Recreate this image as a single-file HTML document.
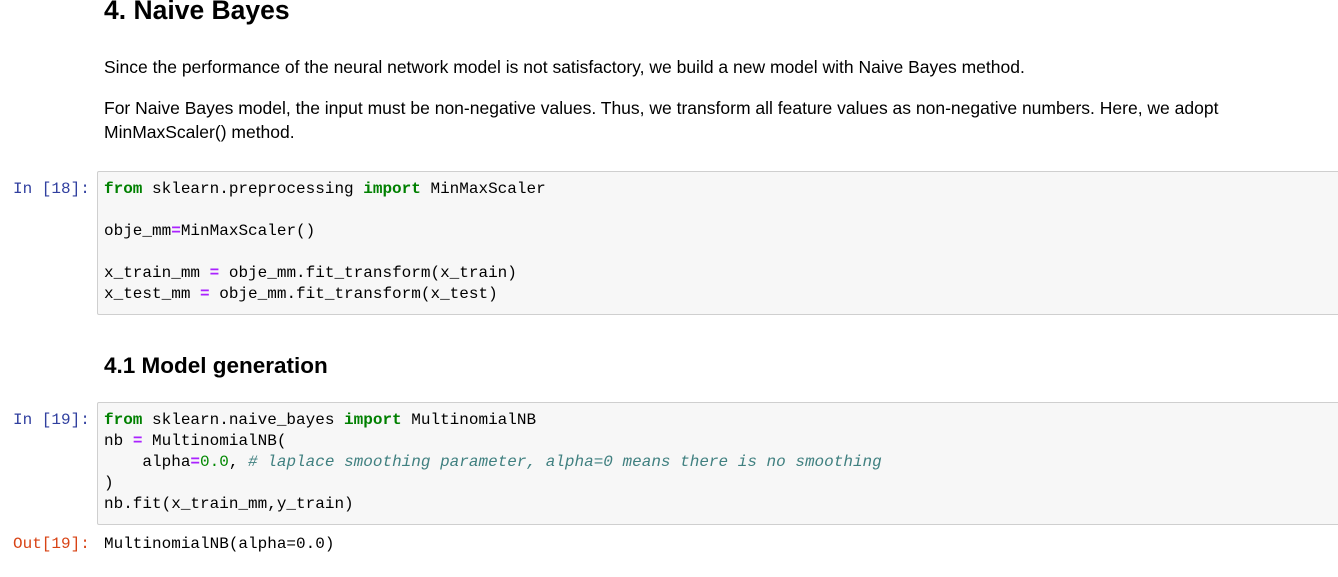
<!DOCTYPE html>
<html><head><style>
body{margin:0;width:1338px;height:577px;overflow:hidden;background:#fff;font-family:"Liberation Sans",sans-serif;color:#000;position:relative}
.a{position:absolute;white-space:pre}
.mono{font-family:"Liberation Mono",monospace;font-size:16px;line-height:21px}
.box{position:absolute;left:97px;width:1250px;background:#f7f7f7;border:1px solid #cfcfcf;border-radius:2px}
.k{color:#008000;font-weight:bold}.o{color:#aa22ff;font-weight:bold}.n{color:#080}.c{color:#408080;font-style:italic}
.p{color:#303f9f}.q{color:#d84315}
</style></head><body>
<div class="a" style="left:104px;top:-5px;font-size:26.5px;font-weight:bold">4. Naive Bayes</div>
<div class="a" style="left:104px;top:57px;font-size:17.5px">Since the performance of the neural network model is not satisfactory, we build a new model with Naive Bayes method.</div>
<div class="a" style="left:104px;top:96px;font-size:17.5px;line-height:24px">For Naive Bayes model, the input must be non-negative values. Thus, we transform all feature values as non-negative numbers. Here, we adopt
MinMaxScaler() method.</div>
<div class="box" style="top:171px;height:142px"></div>
<div class="a mono p" style="left:13px;top:179px">In [18]:</div>
<div class="a mono" style="left:104px;top:179px"><span class="k">from</span> sklearn.preprocessing <span class="k">import</span> MinMaxScaler

obje_mm<span class="o">=</span>MinMaxScaler()

x_train_mm <span class="o">=</span> obje_mm.fit_transform(x_train)
x_test_mm <span class="o">=</span> obje_mm.fit_transform(x_test)</div>
<div class="a" style="left:104px;top:353px;font-size:22.5px;font-weight:bold">4.1 Model generation</div>
<div class="box" style="top:402px;height:121px"></div>
<div class="a mono p" style="left:13px;top:410px">In [19]:</div>
<div class="a mono" style="left:104px;top:410px"><span class="k">from</span> sklearn.naive_bayes <span class="k">import</span> MultinomialNB
nb <span class="o">=</span> MultinomialNB(
    alpha<span class="o">=</span><span class="n">0.0</span>, <span class="c"># laplace smoothing parameter, alpha=0 means there is no smoothing</span>
)
nb.fit(x_train_mm,y_train)</div>
<div class="a mono q" style="left:13px;top:534px">Out[19]:</div>
<div class="a mono" style="left:104px;top:534px">MultinomialNB(alpha=0.0)</div>
</body></html>
